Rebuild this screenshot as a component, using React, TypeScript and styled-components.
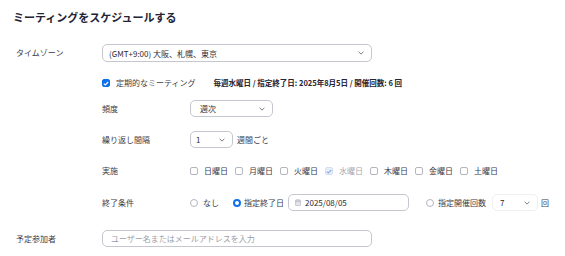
import React from "react"
import styled, { createGlobalStyle } from "styled-components"

const GlobalStyle = createGlobalStyle`
  html, body {
    margin: 0;
    padding: 0;
    background: #ffffff;
  }
  body {
    font-family: "Noto Sans CJK JP", "Noto Sans", sans-serif;
    color: #2d2d36;
  }
`

const Page = styled.div`
  width: 565px;
  height: 256px;
  box-sizing: border-box;
  padding: 11px 0 0 13px;
  overflow: hidden;
`

const Title = styled.h1`
  margin: 0;
  font-size: 11px;
  line-height: 12px;
  font-weight: 700;
  color: #232333;
`

const Row = styled.div<{ $top: number; $h?: number }>`
  display: flex;
  align-items: center;
  margin-top: ${(p) => p.$top}px;
  height: ${(p) => p.$h ?? 17}px;
`

const Label = styled.div<{ $w: number; $pad?: number }>`
  flex-shrink: 0;
  box-sizing: border-box;
  width: ${(p) => p.$w}px;
  padding-left: ${(p) => p.$pad ?? 0}px;
  font-size: 8px;
  line-height: 10px;
  color: #3b3b45;
`

const Section = styled.div`
  padding-left: 89px;
`

const Text = styled.span<{ $ml?: number; $muted?: boolean; $bold?: boolean; $size?: number }>`
  margin-left: ${(p) => p.$ml ?? 0}px;
  font-size: ${(p) => p.$size ?? 8}px;
  line-height: 10px;
  font-weight: ${(p) => (p.$bold ? 700 : 400)};
  color: ${(p) => (p.$muted ? "#a7a7b0" : p.$bold ? "#232333" : "#3b3b45")};
  white-space: nowrap;
`

const SelectBox = styled.div<{ $w: number; $h?: number; $pl?: number; $faint?: boolean; $ml?: number }>`
  box-sizing: border-box;
  display: flex;
  align-items: center;
  justify-content: space-between;
  width: ${(p) => p.$w}px;
  height: ${(p) => p.$h ?? 17}px;
  margin-left: ${(p) => p.$ml ?? 0}px;
  padding: 0 7px 0 ${(p) => p.$pl ?? 6}px;
  border: 1px solid ${(p) => (p.$faint ? "#efeff2" : "#c6c6cf")};
  border-radius: 5px;
  font-size: 8px;
  color: #2d2d36;
  white-space: nowrap;
`

const InputBox = styled.div<{ $w: number; $pl?: number; $ml?: number }>`
  box-sizing: border-box;
  display: flex;
  align-items: center;
  gap: 4px;
  width: ${(p) => p.$w}px;
  height: 17px;
  margin-left: ${(p) => p.$ml ?? 0}px;
  padding-left: ${(p) => p.$pl ?? 6}px;
  border: 1px solid #c6c6cf;
  border-radius: 5px;
  font-size: 8px;
  color: #2d2d36;
`

const Placeholder = styled.span`
  color: #9d9da8;
`

const Box = styled.span<{ $checked?: boolean; $disabled?: boolean }>`
  box-sizing: border-box;
  display: inline-flex;
  align-items: center;
  justify-content: center;
  flex-shrink: 0;
  width: 8px;
  height: 8px;
  border-radius: 2px;
  border: 1px solid
    ${(p) => (p.$disabled ? "#d3def2" : p.$checked ? "#0e71eb" : "#b5b5bf")};
  background: ${(p) => (p.$disabled ? "#e9f0fb" : p.$checked ? "#0e71eb" : "#ffffff")};
`

const Radio = styled.span<{ $on?: boolean; $ml?: number }>`
  box-sizing: border-box;
  flex-shrink: 0;
  width: 8px;
  height: 8px;
  margin-left: ${(p) => p.$ml ?? 0}px;
  border-radius: 50%;
  border: ${(p) => (p.$on ? "2.5px solid #0e71eb" : "1px solid #b5b5bf")};
  background: #ffffff;
`

const DayList = styled.div`
  display: flex;
  gap: 7px;
`

const Day = styled.div`
  display: flex;
  align-items: center;
  gap: 6px;
  width: 38px;
`

const Chevron = () => (
  <svg width="6" height="4" viewBox="0 0 6 4">
    <path d="M0.6 0.8 L3 3.1 L5.4 0.8" fill="none" stroke="#6e6e78" strokeWidth="0.9" />
  </svg>
)

const Check = ({ color }: { color: string }) => (
  <svg width="6" height="5" viewBox="0 0 6 5">
    <path d="M0.8 2.6 L2.3 4 L5.2 1" fill="none" stroke={color} strokeWidth="1.1" />
  </svg>
)

const Calendar = () => (
  <svg width="6" height="7" viewBox="0 0 6 7">
    <rect x="0.4" y="1" width="5.2" height="5.6" rx="0.8" fill="#e4e4ea" stroke="#a9a9b3" strokeWidth="0.6" />
    <line x1="0.4" y1="2.6" x2="5.6" y2="2.6" stroke="#a9a9b3" strokeWidth="0.6" />
    <line x1="1.8" y1="0.2" x2="1.8" y2="1.6" stroke="#a9a9b3" strokeWidth="0.6" />
    <line x1="4.2" y1="0.2" x2="4.2" y2="1.6" stroke="#a9a9b3" strokeWidth="0.6" />
  </svg>
)

const days = [
  { name: "日曜日" },
  { name: "月曜日" },
  { name: "火曜日" },
  { name: "水曜日", checked: true, disabled: true },
  { name: "木曜日" },
  { name: "金曜日" },
  { name: "土曜日" },
]

export default function App() {
  return (
    <Page>
      <GlobalStyle />
      <Title>ミーティングをスケジュールする</Title>

      <Row $top={21} $h={18}>
        <Label $w={89} $pad={3}>タイムゾーン</Label>
        <SelectBox $w={270} $h={18}>
          <span>(GMT+9:00) 大阪、札幌、東京</span>
          <Chevron />
        </SelectBox>
      </Row>

      <Section>
        <Row $top={15} $h={12}>
          <Box $checked>
            <Check color="#ffffff" />
          </Box>
          <Text $ml={6}>定期的なミーティング</Text>
          <Text $ml={18} $bold $size={7.5}>
            毎週水曜日 / 指定終了日: 2025年8月5日 / 開催回数: 6 回
          </Text>
        </Row>

        <Row $top={11}>
          <Label $w={88}>頻度</Label>
          <SelectBox $w={83} $pl={9}>
            <span>週次</span>
            <Chevron />
          </SelectBox>
        </Row>

        <Row $top={14}>
          <Label $w={88}>繰り返し間隔</Label>
          <SelectBox $w={43} $pl={5}>
            <span>1</span>
            <Chevron />
          </SelectBox>
          <Text $ml={4}>週間ごと</Text>
        </Row>

        <Row $top={17} $h={12}>
          <Label $w={88}>実施</Label>
          <DayList>
            {days.map((d) => (
              <Day key={d.name}>
                <Box $checked={d.checked} $disabled={d.disabled}>
                  {d.checked && <Check color="#8eaee2" />}
                </Box>
                <Text $muted={d.disabled}>{d.name}</Text>
              </Day>
            ))}
          </DayList>
        </Row>

        <Row $top={17}>
          <Label $w={88}>終了条件</Label>
          <Radio />
          <Text $ml={5}>なし</Text>
          <Radio $on $ml={14} />
          <Text $ml={3}>指定終了日</Text>
          <InputBox $w={121} $ml={4}>
            <Calendar />
            <span>2025/08/05</span>
          </InputBox>
          <Radio $ml={17} />
          <Text $ml={4}>指定開催回数</Text>
          <SelectBox $w={46} $pl={7} $ml={6} $faint>
            <span>7</span>
            <Chevron />
          </SelectBox>
          <Text $ml={3}>回</Text>
        </Row>
      </Section>

      <Row $top={19}>
        <Label $w={89} $pad={3}>予定参加者</Label>
        <InputBox $w={270} $pl={8}>
          <Placeholder>ユーザー名またはメールアドレスを入力</Placeholder>
        </InputBox>
      </Row>
    </Page>
  )
}
